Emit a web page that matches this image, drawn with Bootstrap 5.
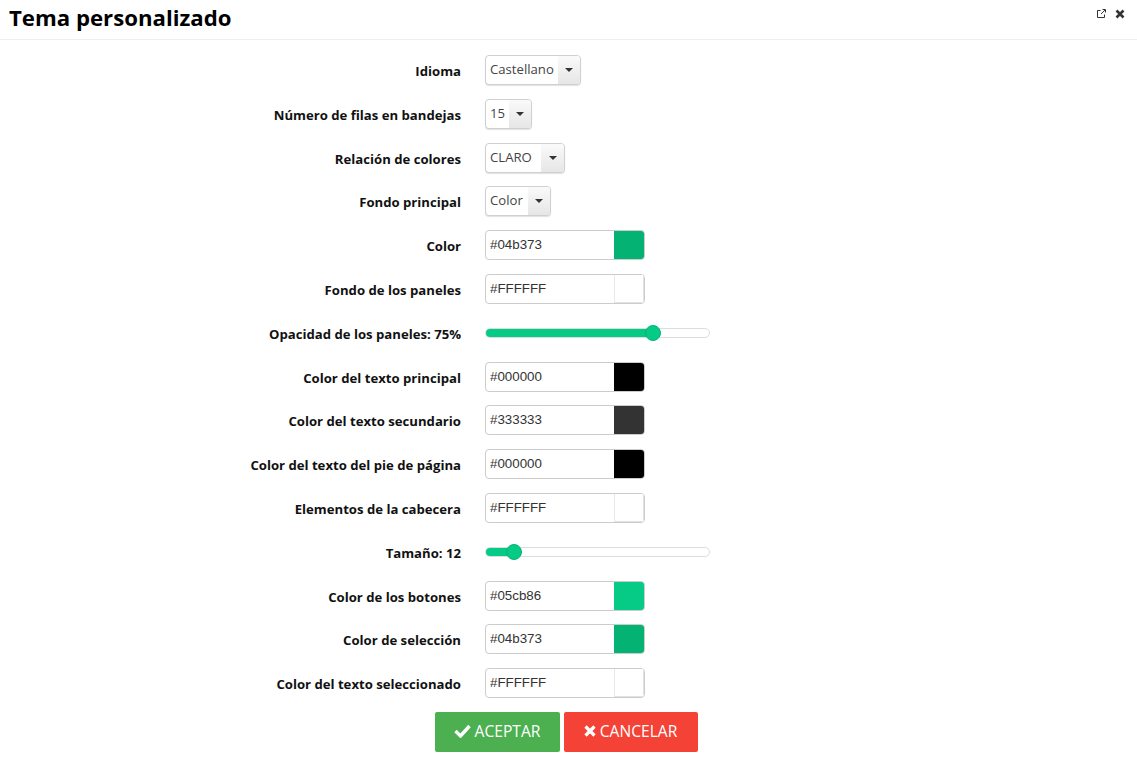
<!DOCTYPE html>
<html lang="es">
<head>
<meta charset="utf-8">
<title>Tema personalizado</title>
<link href="https://cdn.jsdelivr.net/npm/bootstrap@5.3.0/dist/css/bootstrap.min.css" rel="stylesheet">
<style>
html,body{height:100%;overflow:hidden;background:#fff}
body{font-family:"Open Sans",sans-serif;color:#000}
.head-bar{height:40px;border-bottom:1px solid #eee;padding-left:9px;padding-right:12px}
.head-title{font-size:22.2px;font-weight:700;line-height:36px;margin:0;color:#000}
.head-tools{gap:9px;padding-top:9px;height:100%}
.form-body{padding-top:8.25px}
.field-row{height:43.786px}
.field-label{width:461px;text-align:right;font-size:13.15px;font-weight:700;line-height:18px;color:#111;padding-top:2px;margin:0}
.field-ctrl{margin-left:24px}
.pick{height:30px;border:1px solid #d0d0d0;border-radius:4px;background:#fff;box-shadow:0 1px 1px rgba(0,0,0,.12);overflow:hidden;font-size:13.15px;color:#444}
.pick-text{padding:0 4px;line-height:26px;flex:1 1 auto;white-space:nowrap}
.pick-arrow{width:22px;background:linear-gradient(#fafafa,#e6e6e6)}
.pick-arrow i{display:block;width:0;height:0;border-left:4px solid transparent;border-right:4px solid transparent;border-top:4px solid #333}
.w-cast{width:96px}.w-num{width:47px}.w-claro{width:80px}.w-color{width:66px}
.w-claro .pick-arrow{width:23px}
.hex-group{width:160px;height:30px;border:1px solid #ccc;border-radius:4px;overflow:hidden;background:#fff;flex-wrap:nowrap}
.hex-text{font-family:"Liberation Sans",sans-serif;font-size:13.33px;color:#333;padding:0 4px;line-height:28px;width:128px;flex:none}
.hex-swatch{width:30px;flex:none}
.swatch-light{border-left:1px solid #e8e8e8;box-shadow:inset -1px -1px 0 #e2e2e2}
.range-track{width:225px;height:10px;border:1px solid #ddd;border-radius:5px;background:#fff;margin-top:1px}
.range-fill{height:100%;background:#05cb86;border-radius:5px}
.range-thumb{position:absolute;top:-4px;width:16px;height:16px;border-radius:50%;background:#05cb86;border:1px solid #04b373;transform:translateX(-8px)}
.action-row{gap:4px;margin-top:7px;padding-left:435px}
.act-btn{height:40px;border:0;border-radius:2px;color:#fff;font-size:15.6px;line-height:38px;padding:0 1px 2px 0;gap:4px}
.act-ok{width:125px;background:#4caf50}
.act-no{width:134px;background:#f44336}
.act-ok:hover{background:#4caf50;color:#fff}.act-no:hover{background:#f44336;color:#fff}
</style>
</head>
<body>
<header class="head-bar d-flex justify-content-between align-items-start">
  <h1 class="head-title">Tema personalizado</h1>
  <div class="head-tools d-flex align-items-start">
    <svg width="9" height="9" viewBox="0 0 9 9" fill="none" stroke="#333" stroke-width="1"><path d="M3.5 1.5H.5v7h7v-3"/><path d="M4 5 8 1M5.5.5h3v3" /></svg>
    <svg width="10" height="10" viewBox="0 0 10 10" stroke="#333" stroke-width="2.6"><path d="M1.5 1.5l7 7M8.5 1.5l-7 7"/></svg>
  </div>
</header>
<main class="form-body">
  <div class="field-row d-flex align-items-center"><label class="field-label">Idioma</label><div class="field-ctrl"><div class="pick w-cast d-flex"><span class="pick-text">Castellano</span><span class="pick-arrow d-flex align-items-center justify-content-center"><i></i></span></div></div></div>
  <div class="field-row d-flex align-items-center"><label class="field-label">Número de filas en bandejas</label><div class="field-ctrl"><div class="pick w-num d-flex"><span class="pick-text">15</span><span class="pick-arrow d-flex align-items-center justify-content-center"><i></i></span></div></div></div>
  <div class="field-row d-flex align-items-center"><label class="field-label">Relación de colores</label><div class="field-ctrl"><div class="pick w-claro d-flex"><span class="pick-text">CLARO</span><span class="pick-arrow d-flex align-items-center justify-content-center"><i></i></span></div></div></div>
  <div class="field-row d-flex align-items-center"><label class="field-label">Fondo principal</label><div class="field-ctrl"><div class="pick w-color d-flex"><span class="pick-text">Color</span><span class="pick-arrow d-flex align-items-center justify-content-center"><i></i></span></div></div></div>
  <div class="field-row d-flex align-items-center"><label class="field-label">Color</label><div class="field-ctrl"><div class="hex-group d-flex"><span class="hex-text">#04b373</span><span class="hex-swatch" style="background:#04b373"></span></div></div></div>
  <div class="field-row d-flex align-items-center"><label class="field-label">Fondo de los paneles</label><div class="field-ctrl"><div class="hex-group d-flex"><span class="hex-text">#FFFFFF</span><span class="hex-swatch swatch-light" style="background:#FFFFFF"></span></div></div></div>
  <div class="field-row d-flex align-items-center"><label class="field-label">Opacidad de los paneles: 75%</label><div class="field-ctrl"><div class="range-track position-relative"><div class="range-fill" style="width:75%"></div><span class="range-thumb" style="left:167px"></span></div></div></div>
  <div class="field-row d-flex align-items-center"><label class="field-label">Color del texto principal</label><div class="field-ctrl"><div class="hex-group d-flex"><span class="hex-text">#000000</span><span class="hex-swatch" style="background:#000000"></span></div></div></div>
  <div class="field-row d-flex align-items-center"><label class="field-label">Color del texto secundario</label><div class="field-ctrl"><div class="hex-group d-flex"><span class="hex-text">#333333</span><span class="hex-swatch" style="background:#333333"></span></div></div></div>
  <div class="field-row d-flex align-items-center"><label class="field-label">Color del texto del pie de página</label><div class="field-ctrl"><div class="hex-group d-flex"><span class="hex-text">#000000</span><span class="hex-swatch" style="background:#000000"></span></div></div></div>
  <div class="field-row d-flex align-items-center"><label class="field-label">Elementos de la cabecera</label><div class="field-ctrl"><div class="hex-group d-flex"><span class="hex-text">#FFFFFF</span><span class="hex-swatch swatch-light" style="background:#FFFFFF"></span></div></div></div>
  <div class="field-row d-flex align-items-center"><label class="field-label">Tamaño: 12</label><div class="field-ctrl"><div class="range-track position-relative"><div class="range-fill" style="width:13%"></div><span class="range-thumb" style="left:28px"></span></div></div></div>
  <div class="field-row d-flex align-items-center"><label class="field-label">Color de los botones</label><div class="field-ctrl"><div class="hex-group d-flex"><span class="hex-text">#05cb86</span><span class="hex-swatch" style="background:#05cb86"></span></div></div></div>
  <div class="field-row d-flex align-items-center"><label class="field-label">Color de selección</label><div class="field-ctrl"><div class="hex-group d-flex"><span class="hex-text">#04b373</span><span class="hex-swatch" style="background:#04b373"></span></div></div></div>
  <div class="field-row d-flex align-items-center"><label class="field-label">Color del texto seleccionado</label><div class="field-ctrl"><div class="hex-group d-flex"><span class="hex-text">#FFFFFF</span><span class="hex-swatch swatch-light" style="background:#FFFFFF"></span></div></div></div>
  <div class="action-row d-flex">
    <button type="button" class="btn act-btn act-ok d-flex align-items-center justify-content-center"><svg width="17" height="14" viewBox="0 0 17 14" fill="none" stroke="#fff" stroke-width="3.4"><path d="M1.5 7l5 5L15.5 2"/></svg>ACEPTAR</button>
    <button type="button" class="btn act-btn act-no d-flex align-items-center justify-content-center"><svg width="12" height="12" viewBox="0 0 12 12" fill="none" stroke="#fff" stroke-width="3.2"><path d="M1.5 1.5l9 9M10.5 1.5l-9 9"/></svg>CANCELAR</button>
  </div>
</main>
<script src="https://cdn.jsdelivr.net/npm/bootstrap@5.3.0/dist/js/bootstrap.bundle.min.js"></script>
</body>
</html>
